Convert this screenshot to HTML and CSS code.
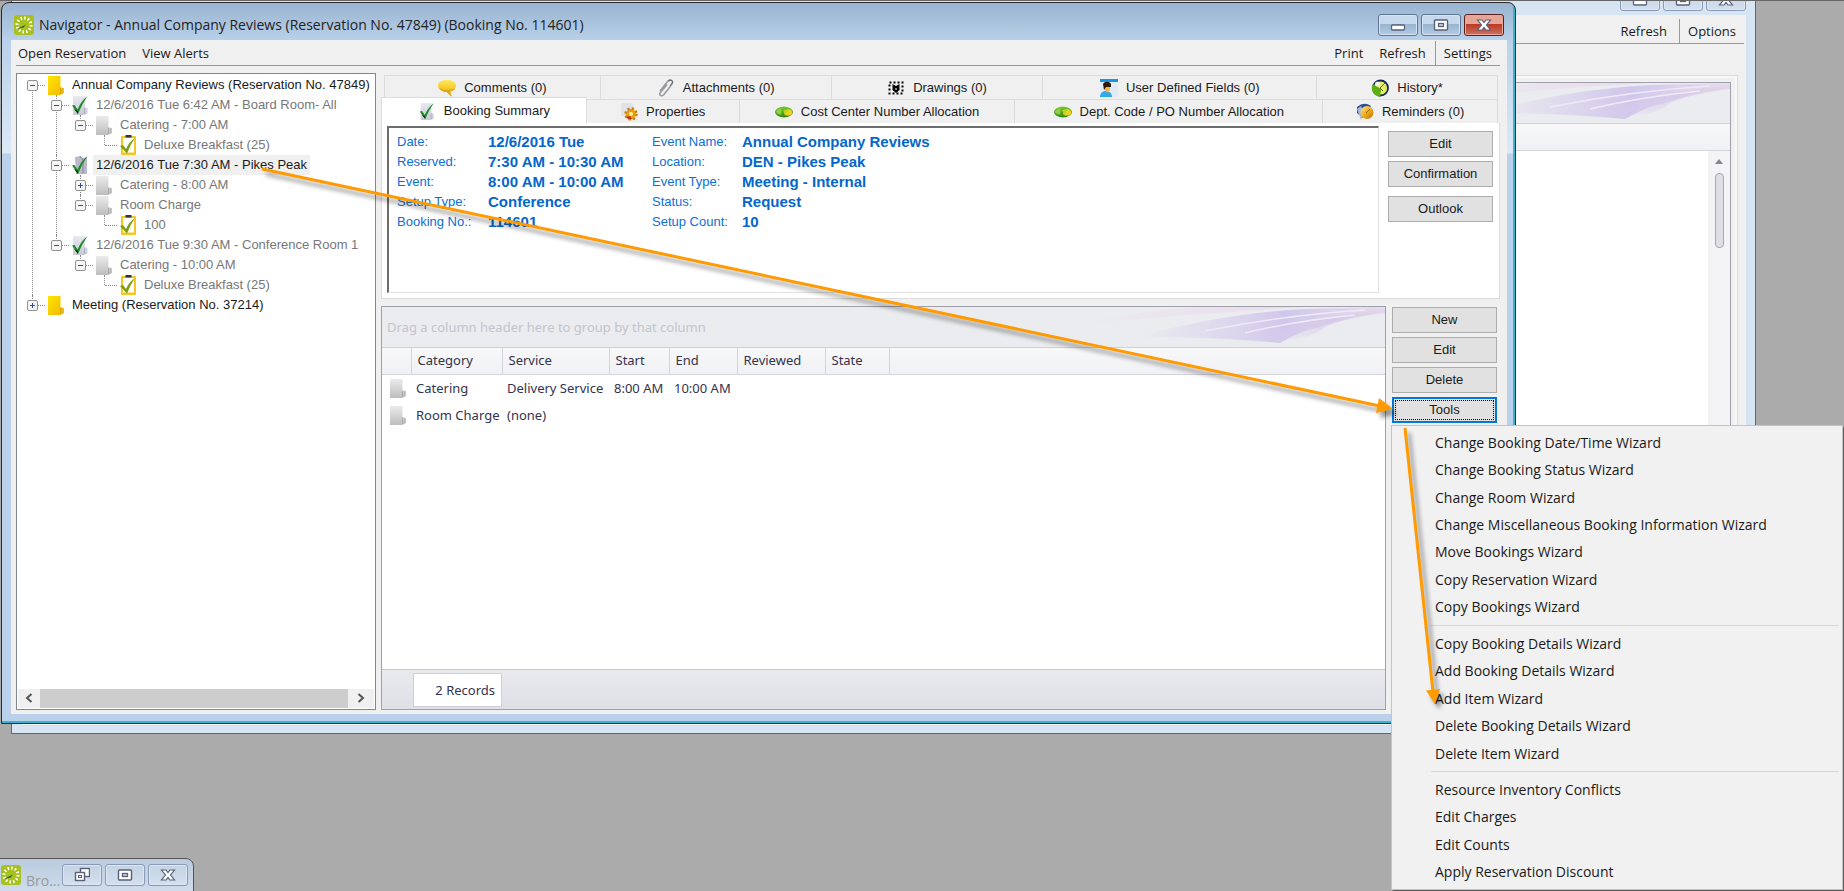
FILE: index.html
```html
<!DOCTYPE html>
<html lang="en">
<head>
<meta charset="utf-8">
<title>Navigator - Annual Company Reviews</title>
<link rel="stylesheet" href="styles.css">
</head>
<body>
<svg class="defs" aria-hidden="true">
  <defs>
    <linearGradient id="gYellow" x1="0" y1="0" x2="1" y2="1"><stop offset="0" stop-color="#ffe600"/><stop offset="1" stop-color="#f2b600"/></linearGradient>
    <linearGradient id="gGrey" x1="0" y1="0" x2="0" y2="1"><stop offset="0" stop-color="#ebebeb"/><stop offset="1" stop-color="#bdbdbd"/></linearGradient>
    <linearGradient id="gLilac" x1="0" y1="0" x2="0" y2="1"><stop offset="0" stop-color="#e9e9f1"/><stop offset="1" stop-color="#c9c9d6"/></linearGradient>
    <linearGradient id="gGold" x1="0" y1="0" x2="1" y2="1"><stop offset="0" stop-color="#ffe9a0"/><stop offset=".5" stop-color="#f0ac1c"/><stop offset="1" stop-color="#b87400"/></linearGradient>
    <linearGradient id="gSpeech" x1="0" y1="0" x2="0" y2="1"><stop offset="0" stop-color="#ffe95a"/><stop offset="1" stop-color="#eba900"/></linearGradient>
    <linearGradient id="gGreen" x1="0" y1="0" x2="0" y2="1"><stop offset="0" stop-color="#7cc82c"/><stop offset="1" stop-color="#2e8a10"/></linearGradient>
    <linearGradient id="gWave" x1="0" y1="0" x2="1" y2="0"><stop offset="0" stop-color="#d3caec" stop-opacity="0"/><stop offset=".6" stop-color="#cabdea" stop-opacity=".8"/><stop offset="1" stop-color="#e0d2ea" stop-opacity=".6"/></linearGradient>
    <linearGradient id="gWave2" x1="0" y1="1" x2="1" y2="0"><stop offset="0" stop-color="#ddd8ee" stop-opacity="0"/><stop offset=".7" stop-color="#d4c4e8" stop-opacity=".6"/><stop offset="1" stop-color="#e2d2ea" stop-opacity=".7"/></linearGradient>
    <linearGradient id="gPink" x1="0" y1="0" x2="1" y2="0"><stop offset="0" stop-color="#eadcea" stop-opacity="0"/><stop offset="1" stop-color="#ead9ea"/></linearGradient>
  </defs>
  <symbol id="i-app" viewBox="0 0 20 20"><rect width="20" height="20" rx="3" fill="#a9c11f"/><circle cx="10" cy="10" r="7" fill="none" stroke="#fff" stroke-width="3" stroke-dasharray="1.500 2.165"/><path d="M3 14l9-4.500-2.500 3z" fill="#155a6b"/></symbol>
  <symbol id="i-folder" viewBox="0 0 16 20"><path d="M0 1h12.500v11l3 1v5.500L12 20H0z" fill="url(#gYellow)"/><path d="M12.500 13v6M15 13v5" fill="none" stroke="#d9a400"/></symbol>
  <symbol id="i-doc" viewBox="0 0 16 20"><path d="M0 1h12.500v11l3 1v5.500L12 20H0z" fill="url(#gGrey)"/><path d="M12.500 13v6M15 13v5" fill="none" stroke="#a9a9a9"/></symbol>
  <symbol id="i-check" viewBox="0 0 16 20"><path d="M1 1h12v11l2.500 1v5.500L12 20H1z" fill="url(#gLilac)"/><path d="M12.500 13v6" fill="none" stroke="#adadbd"/><path d="M0 10.500l2.500-.5 3 4.500Q9 6 15.500 1 10 9 6 19z" fill="#1d8a2a"/><path d="M2 14l4 2v3z" fill="#06330d"/></symbol>
  <symbol id="i-open" viewBox="0 0 16 20"><path d="M3 2l5-1 3 2 4-1v17H4z" fill="#b9b9c9"/><path d="M8 1l3 4v13" fill="none" stroke="#85859b"/><path d="M0 10.500l2.500-.5 3 4.500Q9 6 15.500 1 10 9 6 19z" fill="#1d8a2a"/><path d="M2 14l4 2v3z" fill="#06330d"/></symbol>
  <symbol id="i-clip" viewBox="0 0 16 20"><rect x="1" y="1" width="15" height="19" rx="1" fill="#f3c623"/><rect x="3" y="3" width="11" height="14.500" fill="#fff"/><rect x="5.500" y="0" width="6" height="2.500" fill="#333"/><path d="M0 11l3-1 3 4Q9 7 15 3 10 10 7 18.500z" fill="#7c9d13"/></symbol>
  <symbol id="i-comment" viewBox="0 0 18 18"><path d="M9 1c5 0 9 2 9 5.500s-3.500 5.500-6 6L14 18l-5.500-5C4 13 0 10.500 0 6.500S4 1 9 1z" fill="url(#gSpeech)"/><path d="M1 9q3 4 8 4l5 5-2-5.500q4-.5 5-3-8 3-16-.5z" fill="#d79800" opacity=".6"/></symbol>
  <symbol id="i-attach" viewBox="0 0 18 18"><path d="M3 12L11 2c1.500-1.500 5-1 4.500 1.500C15 5 9 13 6.500 16c-1.500 1.500-5 .5-3.500-2L10 5.500" fill="none" stroke="#9a9aa0" stroke-width="1.600"/><path d="M11 2c1.500-1.500 5-1 4.500 1.500l-2 3" fill="none" stroke="#5d5d66"/></symbol>
  <symbol id="i-draw" viewBox="0 0 18 18"><rect x="2.500" y="3.500" width="13" height="11" fill="none" stroke="#000" stroke-width="2" stroke-dasharray="2 2"/><path d="M5.500 5l3.500 2 3.500-2v6L9 14l-3.500-3z" fill="#000"/><path d="M9 9v2" stroke="#fff"/></symbol>
  <symbol id="i-user" viewBox="0 0 18 18"><rect width="18" height="18" fill="#e3ebf5"/><rect width="18" height="3" fill="#1597e5"/><path d="M0 18c0-4 3-6 6-6s6 2 6 6z" fill="#34a9ea"/><path d="M4 6h6v5l-2 3-4-4z" fill="#f4b54d"/><path d="M3 5c2-3 6-3 8 0v3H6l-2 3z" fill="#2d1608"/></symbol>
  <symbol id="i-history" viewBox="0 0 18 18"><circle cx="9.500" cy="9" r="7.500" fill="#e8ef66" stroke="#14285a" stroke-width="1.800"/><path d="M2 5c-3 6 0 12 7 13l1-8z" fill="#5cae12"/><path d="M9 9l5-5M9 9l3 3" stroke="#5c6c12"/><circle cx="6.500" cy="5" r="2.500" fill="#fff" opacity=".8"/></symbol>
  <symbol id="i-prop" viewBox="0 0 18 18"><path d="M1 0h10l3 3v10H1z" fill="#e2e2ea"/><g transform="translate(11 11)"><circle r="5" fill="#e8a010"/><circle r="5.500" fill="none" stroke="#c9810b" stroke-width="2.500" stroke-dasharray="2.200 2.120"/><circle r="2" fill="#fff0a0"/><path d="M-5 3q2 3 6 2l-2-3z" fill="#d02a10"/></g></symbol>
  <symbol id="i-money" viewBox="0 0 20 14"><ellipse cx="10" cy="7" rx="10" ry="6" fill="url(#gGreen)"/><path d="M1 7q2-4 6-4v7q-4 0-6-3z" fill="#8fcf4a"/><ellipse cx="14.500" cy="7.500" rx="4.500" ry="3.500" fill="#f0d020"/><path d="M9 5q3-1 6 0l-4 5z" fill="#b7d622"/></symbol>
  <symbol id="i-remind" viewBox="0 0 18 18"><path d="M1 4Q8-2 15 3L7 15 1 10z" fill="#27509a"/><path d="M1 6l4-3 3 7-3 7z" fill="#a9b7d4"/><circle cx="11" cy="9.500" r="6.500" fill="url(#gGold)"/><path d="M10 10l4-4" stroke="#9a6500"/></symbol>
  <symbol id="i-min" viewBox="0 0 16 16"><rect x="1.500" y="8" width="13" height="5" rx="1" fill="#fff" stroke="#59617a" stroke-width="1.300"/></symbol>
  <symbol id="i-max" viewBox="0 0 16 16"><rect x="1.500" y="3" width="13" height="10" rx="1" fill="#fff" stroke="#59617a" stroke-width="1.400"/><rect x="5.500" y="6.500" width="5" height="3" fill="#c5d3e6" stroke="#59617a" stroke-width="1.300"/></symbol>
  <symbol id="i-restore" viewBox="0 0 16 16"><rect x="6.500" y="1.500" width="9" height="8" fill="#fff" stroke="#59617a" stroke-width="1.400"/><rect x="1.500" y="5.500" width="9" height="8" fill="#fff" stroke="#59617a" stroke-width="1.400"/><rect x="4.500" y="8.500" width="3" height="2" fill="none" stroke="#59617a"/></symbol>
  <symbol id="i-close" viewBox="0 0 16 16"><path d="M1.500 3H6l2 2.500L10 3h4.500L10.500 8l4 5H10l-2-2.500L6 13H1.500l4-5z" fill="#fff" stroke="#59617a" stroke-width="1.200"/></symbol>
  <symbol id="i-wave" viewBox="0 0 310 40"><path d="M0 18Q120 6 230 0H130Q70 2 0 18z" fill="url(#gPink)"/><path d="M60 30Q150 6 230 2l80-2v5Q270 10 245 20 225 24 205 36q-60-6-145-6z" fill="url(#gWave)"/><path d="M150 38q40-10 70-20 40-10 90-16v4q-40 5-60 14-8 8-25 11-35 5-75 7z" fill="url(#gWave2)"/><path d="M130 24Q210 8 290 3M170 26Q220 14 280 8" fill="none" stroke="#efeaf6" stroke-width="1.500"/></symbol>
</svg>

<main class="desktop">
  <section class="window back-window" aria-label="Browser">
    <div class="caption-buttons back-caption">
      <button class="cap pale" aria-label="Minimize"><svg><use href="#i-min"/></svg></button>
      <button class="cap pale" aria-label="Maximize"><svg><use href="#i-max"/></svg></button>
      <button class="cap pale" aria-label="Close"><svg><use href="#i-close"/></svg></button>
    </div>
    <div class="back-client">
      <div class="menubar"><span class="grow"></span><button class="link">Refresh</button><button class="link split">Options</button></div>
      <div class="back-page">
        <div class="back-grid">
          <div class="group-panel"><svg class="wave" preserveAspectRatio="none"><use href="#i-wave"/></svg></div>
          <div class="back-head"></div>
          <div class="back-body"><div class="vscroll"><span class="up"></span><span class="vthumb"></span></div></div>
        </div>
      </div>
    </div>
  </section>

  <section class="window main-window" aria-label="Navigator">
    <header class="titlebar">
      <svg class="app"><use href="#i-app"/></svg>
      <h1>Navigator - Annual Company Reviews (Reservation No. 47849) (Booking No. 114601)</h1>
      <div class="caption-buttons">
        <button class="cap" aria-label="Minimize"><svg><use href="#i-min"/></svg></button>
        <button class="cap" aria-label="Maximize"><svg><use href="#i-max"/></svg></button>
        <button class="cap red" aria-label="Close"><svg><use href="#i-close"/></svg></button>
      </div>
    </header>
    <div class="client">
      <nav class="menubar">
        <button class="link">Open Reservation</button><button class="link">View Alerts</button>
        <span class="grow"></span>
        <button class="link">Print</button><button class="link">Refresh</button><button class="link split">Settings</button>
      </nav>
      <div class="columns">
        <aside class="tree-box">
          <ul class="tree">
            <li><div class="row"><button class="exp" aria-label="Collapse"></button><i></i><svg><use href="#i-folder"/></svg><span class="dark">Annual Company Reviews (Reservation No. 47849)</span></div>
              <ul>
                <li><div class="row"><button class="exp" aria-label="Collapse"></button><i></i><svg><use href="#i-check"/></svg><span>12/6/2016 Tue 6:42 AM - Board Room- All</span></div>
                  <ul><li><div class="row"><button class="exp" aria-label="Collapse"></button><i></i><svg><use href="#i-doc"/></svg><span>Catering - 7:00 AM</span></div>
                    <ul><li><div class="row leaf"><i></i><svg><use href="#i-clip"/></svg><span>Deluxe Breakfast (25)</span></div></li></ul></li></ul></li>
                <li><div class="row"><button class="exp" aria-label="Collapse"></button><i></i><svg><use href="#i-open"/></svg><span class="dark selected">12/6/2016 Tue 7:30 AM - Pikes Peak</span></div>
                  <ul>
                    <li><div class="row"><button class="exp plus" aria-label="Expand"></button><i></i><svg><use href="#i-doc"/></svg><span>Catering - 8:00 AM</span></div></li>
                    <li><div class="row"><button class="exp" aria-label="Collapse"></button><i></i><svg><use href="#i-doc"/></svg><span>Room Charge</span></div>
                      <ul><li><div class="row leaf"><i></i><svg><use href="#i-clip"/></svg><span>100</span></div></li></ul></li>
                  </ul></li>
                <li><div class="row"><button class="exp" aria-label="Collapse"></button><i></i><svg><use href="#i-check"/></svg><span>12/6/2016 Tue 9:30 AM - Conference Room 1</span></div>
                  <ul><li><div class="row"><button class="exp" aria-label="Collapse"></button><i></i><svg><use href="#i-doc"/></svg><span>Catering - 10:00 AM</span></div>
                    <ul><li><div class="row leaf"><i></i><svg><use href="#i-clip"/></svg><span>Deluxe Breakfast (25)</span></div></li></ul></li></ul></li>
              </ul></li>
            <li><div class="row"><button class="exp plus" aria-label="Expand"></button><i></i><svg><use href="#i-folder"/></svg><span class="dark">Meeting (Reservation No. 37214)</span></div></li>
          </ul>
          <div class="hscroll">
            <button aria-label="Scroll left"><svg viewBox="0 0 8 10"><path d="M6.500 1L2 5l4.500 4" /></svg></button>
            <span class="hthumb"></span>
            <button aria-label="Scroll right"><svg viewBox="0 0 8 10"><path d="M1.500 1L6 5 1.500 9" /></svg></button>
          </div>
        </aside>
        <div class="detail">
          <div class="tabs tabs-back" role="tablist">
            <button class="tab" role="tab"><svg><use href="#i-comment"/></svg>Comments (0)</button>
            <button class="tab" role="tab"><svg><use href="#i-attach"/></svg>Attachments (0)</button>
            <button class="tab" role="tab"><svg><use href="#i-draw"/></svg>Drawings (0)</button>
            <button class="tab" role="tab"><svg><use href="#i-user"/></svg>User Defined Fields (0)</button>
            <button class="tab" role="tab"><svg><use href="#i-history"/></svg>History*</button>
          </div>
          <div class="tabs tabs-front" role="tablist">
            <button class="tab active" role="tab" aria-selected="true"><svg><use href="#i-check"/></svg>Booking Summary</button>
            <button class="tab" role="tab"><svg><use href="#i-prop"/></svg>Properties</button>
            <button class="tab" role="tab"><svg><use href="#i-money"/></svg>Cost Center Number Allocation</button>
            <button class="tab" role="tab"><svg><use href="#i-money"/></svg>Dept. Code / PO Number Allocation</button>
            <button class="tab" role="tab"><svg><use href="#i-remind"/></svg>Reminders (0)</button>
          </div>
          <div class="page">
            <dl class="summary">
              <dt>Date:</dt><dd>12/6/2016 Tue</dd><dt>Event Name:</dt><dd>Annual Company Reviews</dd>
              <dt>Reserved:</dt><dd>7:30 AM - 10:30 AM</dd><dt>Location:</dt><dd>DEN - Pikes Peak</dd>
              <dt>Event:</dt><dd>8:00 AM - 10:00 AM</dd><dt>Event Type:</dt><dd>Meeting - Internal</dd>
              <dt>Setup Type:</dt><dd>Conference</dd><dt>Status:</dt><dd>Request</dd>
              <dt>Booking No.:</dt><dd>114601</dd><dt>Setup Count:</dt><dd>10</dd>
            </dl>
            <div class="side page-side">
              <button class="btn">Edit</button><button class="btn">Confirmation</button><button class="btn apart">Outlook</button>
            </div>
          </div>
          <div class="lower">
            <div class="grid-box">
              <div class="group-panel"><span>Drag a column header here to group by that column</span><svg class="wave" preserveAspectRatio="none"><use href="#i-wave"/></svg></div>
              <table>
                <colgroup><col class="c0"><col class="c1"><col class="c2"><col class="c3"><col class="c4"><col class="c5"><col class="c6"><col></colgroup>
                <thead><tr><th></th><th>Category</th><th>Service</th><th>Start</th><th>End</th><th>Reviewed</th><th>State</th><th></th></tr></thead>
                <tbody>
                  <tr><td><svg><use href="#i-doc"/></svg></td><td>Catering</td><td>Delivery Service</td><td>8:00 AM</td><td>10:00 AM</td><td></td><td></td><td></td></tr>
                  <tr><td><svg><use href="#i-doc"/></svg></td><td>Room Charge</td><td>(none)</td><td></td><td></td><td></td><td></td><td></td></tr>
                </tbody>
              </table>
              <footer><span>2 Records</span></footer>
            </div>
            <div class="side lower-side">
              <button class="btn">New</button><button class="btn">Edit</button><button class="btn">Delete</button><button class="btn focused">Tools</button>
            </div>
          </div>
        </div>
      </div>
    </div>
  </section>

  <section class="mini-window" aria-label="Minimized window">
    <svg class="app"><use href="#i-app"/></svg><span class="mini-title">Bro...</span>
    <div class="caption-buttons">
      <button class="cap pale" aria-label="Restore"><svg><use href="#i-restore"/></svg></button>
      <button class="cap pale" aria-label="Maximize"><svg><use href="#i-max"/></svg></button>
      <button class="cap pale" aria-label="Close"><svg><use href="#i-close"/></svg></button>
    </div>
  </section>

  <div class="menu" role="menu">
    <button role="menuitem">Change Booking Date/Time Wizard</button>
    <button role="menuitem">Change Booking Status Wizard</button>
    <button role="menuitem">Change Room Wizard</button>
    <button role="menuitem">Change Miscellaneous Booking Information Wizard</button>
    <button role="menuitem">Move Bookings Wizard</button>
    <button role="menuitem">Copy Reservation Wizard</button>
    <button role="menuitem">Copy Bookings Wizard</button>
    <hr>
    <button role="menuitem">Copy Booking Details Wizard</button>
    <button role="menuitem">Add Booking Details Wizard</button>
    <button role="menuitem">Add Item Wizard</button>
    <button role="menuitem">Delete Booking Details Wizard</button>
    <button role="menuitem">Delete Item Wizard</button>
    <hr>
    <button role="menuitem">Resource Inventory Conflicts</button>
    <button role="menuitem">Edit Charges</button>
    <button role="menuitem">Edit Counts</button>
    <button role="menuitem">Apply Reservation Discount</button>
  </div>

  <svg class="arrows" aria-hidden="true">
    <g><path d="M262 169L1380 406" /><path class="head" d="M1379 398l14 11-17 4z"/></g>
    <g><path d="M1405 428L1433 692"/><path class="head" d="M1426 690.500l14-1.500-5 15z"/></g>
  </svg>
</main>
</body>
</html>
```

FILE: styles.css
```css
* { box-sizing: border-box; }
body { margin: 0; overflow: hidden; font: 13px/16px "Liberation Sans", sans-serif; color: #1a1a1a; }
button { font: inherit; color: inherit; margin: 0; padding: 0; border: 0; background: none; white-space: nowrap; }
ul, dl, dd { margin: 0; padding: 0; list-style: none; }
.defs { position: absolute; width: 0; height: 0; }
.desktop { position: relative; height: 100vh; background: #ababab; border-top: 1px solid #666; overflow: hidden; }
.grow { flex: 1; }

/* windows on the desktop */
.window { position: absolute; display: flex; flex-direction: column; }
.back-window { inset: 0 88px 157px 11px; background: #d7e4f2; border: 1px solid #666; border-top: 0; padding: 0 9px 7px; }
.main-window { inset: 1px 328px 167px 1px; padding: 0 8px 9px 9px; border: 1px solid #2a2a2a; border-radius: 8px 8px 0 0;
  background: linear-gradient(#99b4d1, #b9d1ea 38px, #dce9f7 150px, #b9d1ea 151px); box-shadow: inset -2px -2px #35b6cf; }
.titlebar { display: flex; align-items: center; height: 37px; padding: 6px 3px 0; }
.app { width: 20px; height: 20px; flex: none; }
h1 { flex: 1; margin: 0 0 0 5px; font: 14px/20px "Open Sans", sans-serif; white-space: nowrap; color: #222; }
.caption-buttons { display: flex; gap: 3px; }
.cap { display: flex; align-items: center; justify-content: center; width: 40px; height: 22px; border: 1px solid #5f7591; border-radius: 3px;
  background: linear-gradient(#c5d8ec 45%, #99b4d1 46%, #b4cbe3); box-shadow: inset 0 0 0 1px #d6e4f3; }
.cap svg { width: 16px; height: 16px; }
.cap.red { border-color: #5b1f1c; background: linear-gradient(#e7a597 45%, #b93a24 46%, #d0705c); box-shadow: inset 0 0 0 1px #e9a99c; }
.cap.pale { border-color: #8b9ab8; background: linear-gradient(#c4d2e2, #d3e0ee); box-shadow: inset 0 0 0 1px #dce7f3; }

.client { flex: 1; min-height: 0; display: flex; flex-direction: column; padding: 0 7px 4px 5px; background: #f0f0f0; }
.menubar { display: flex; align-items: center; height: 26px; margin-bottom: 7px; border-bottom: 1px solid #999; font: 13px/20px "Open Sans", sans-serif; }
.menubar .link { margin-left: 16px; }
.menubar .link:first-child { margin-left: 2px; }
.menubar .link.split { margin-left: 9px; padding: 2px 8px; border-left: 1px solid #999; }
.columns { flex: 1; min-height: 0; display: grid; grid-template-columns: 360px minmax(0, 1fr); gap: 5px; }

/* tree */
.tree-box { display: flex; flex-direction: column; justify-content: space-between; overflow: hidden; background: #fff; border: 1px solid #828790; padding: 1px; }
.tree { padding-left: 9px; overflow: hidden; color: #777; }
.tree ul { padding-left: 24px; }
.tree li { position: relative; }
.tree li::before { content: ""; position: absolute; left: 5px; top: 0; bottom: 0; border-left: 1px dotted #888; }
.tree li:last-child::before { bottom: auto; height: 10px; }
.tree > li:first-child::before { top: 10px; }
.row { position: relative; display: flex; align-items: center; height: 20px; white-space: nowrap; }
.row svg { width: 16px; height: 20px; margin-left: 3px; flex: none; }
.row i { width: 7px; border-top: 1px dotted #888; flex: none; }
.leaf i { width: 12px; margin-left: 6px; }
.row span { margin-left: 5px; padding: 0 3px; line-height: 20px; }
.row .dark { color: #1a1a1a; }
.row .selected { background: #f0f0f0; }
.exp { width: 11px; height: 11px; flex: none; border: 1px solid #919191; border-radius: 2px; background: linear-gradient(#2c4e96, #2c4e96) center / 5px 1px no-repeat, #f6f6f6; }
.exp.plus { background: linear-gradient(#2c4e96, #2c4e96) center / 5px 1px no-repeat, linear-gradient(#2c4e96, #2c4e96) center / 1px 5px no-repeat, #f6f6f6; }
.hscroll { display: flex; height: 19px; background: #f0f0f0; }
.hscroll button { width: 22px; }
.hscroll button:last-child { width: 26px; }
.hscroll svg { width: 8px; height: 10px; fill: none; stroke: #555; stroke-width: 2; }
.hthumb { flex: 1; background: #cdcdcd; }

/* tabs */
.detail { display: flex; flex-direction: column; min-width: 0; }
.tabs { display: grid; margin: 0 2px 0 3px; }
.tabs-back { grid-template-columns: 217fr 231fr 212fr 274fr 181fr; height: 24px; margin-top: 2px; }
.tabs-front { grid-template-columns: 206fr 153fr 276fr 308fr 175fr; height: 24px; margin-left: 0; }
.tab { display: flex; align-items: center; justify-content: center; gap: 8px; border: 1px solid #dcdcdc; border-width: 1px 1px 0 0; }
.tabs-back .tab:first-child { border-left-width: 1px; }
.tab svg { width: 18px; height: 18px; }
.tab.active { position: relative; margin-top: -2px; border-left-width: 1px; background: #fff; }
.page { display: flex; gap: 9px; padding: 3px 6px 5px 5px; background: #fff; border: 1px solid #dcdcdc; border-top: 0; }
.summary { flex: 1; display: grid; grid-template-columns: 91px 164px 90px 1fr; grid-auto-rows: 20px; align-items: center; min-height: 167px;
  padding: 4px 8px; border: solid #e3e3e3; border-width: 2px 1px 1px 2px; border-top-color: #6d6d6d; border-left-color: #6d6d6d; color: #0b6fd6; white-space: nowrap; }
.summary dd { font-size: 15px; font-weight: bold; color: #0566cc; }
.side { display: flex; flex-direction: column; gap: 4px; width: 105px; }
.page-side { padding-top: 5px; }
.btn { height: 26px; border: 1px solid #adadad; background: #e1e1e1; }
.btn.apart { margin-top: 5px; }
.btn.focused { border: 2px solid #0078d7; outline: 1px dotted #000; outline-offset: -4px; }

/* booking details grid */
.lower { flex: 1; display: flex; gap: 6px; margin-top: 7px; padding-right: 3px; }
.lower-side { padding-top: 1px; }
.grid-box { flex: 1; display: flex; flex-direction: column; border: 1px solid #a0a0ac; background: #fff; font: 13px/18px "Noto Sans", sans-serif; color: #33334d; }
.group-panel { display: flex; justify-content: space-between; align-items: center; height: 41px; padding-left: 5px; background: #ebecef; border-bottom: 1px solid #cfd0d8; color: #c3c4cc; }
.wave { width: 310px; height: 40px; }
table { width: 100%; table-layout: fixed; border-collapse: collapse; }
.c0 { width: 29px; } .c1 { width: 91px; } .c2 { width: 107px; } .c3 { width: 60px; }
.c4 { width: 68px; } .c5 { width: 88px; } .c6 { width: 64px; }
th { height: 26px; padding: 0 6px 2px; text-align: left; font-weight: normal; background: linear-gradient(#f8f8f9, #f0f1f4); border: solid #d3d4dc; border-width: 0 1px 1px 0; }
th:last-child { border-right: 0; }
td { height: 27px; padding: 0 5px; white-space: nowrap; }
td svg { display: block; width: 16px; height: 20px; margin-left: 3px; }
.grid-box footer { display: flex; align-items: center; margin-top: auto; height: 40px; padding-left: 31px; background: linear-gradient(#e9e9ee, #dfe0e6); border-top: 1px solid #c6c7cf; }
footer span { width: 89px; padding: 7px 6px; text-align: right; background: #fff; border: 1px solid #ceced6; }

/* window behind */
.back-caption { justify-content: flex-end; height: 14px; }
.back-caption .cap { margin-top: -12px; }
.back-client { flex: 1; display: flex; flex-direction: column; padding-right: 2px; background: #f0f0f0; }
.back-client .menubar { height: 29px; margin-bottom: 31px; padding-top: 3px; }
.back-client .menubar .link.split { margin-left: 12px; }
.back-page { flex: 1; display: flex; margin-right: 6px; padding: 6px 6px 6px 0; border: 1px solid #dcdcdc; box-shadow: inset 0 0 0 2px #f8f8f8; }
.back-grid { flex: 1; display: flex; flex-direction: column; border: 1px solid #a0a0ac; background: #fff; }
.back-grid .group-panel { justify-content: flex-end; }
.back-head { height: 27px; background: linear-gradient(#f8f8f9, #f0f1f4); border-bottom: 1px solid #d3d4dc; }
.back-body { flex: 1; display: flex; justify-content: flex-end; }
.vscroll { display: flex; flex-direction: column; align-items: center; gap: 9px; width: 22px; padding-top: 8px; background: #f4f4f6; }
.up { border: 4px solid transparent; border-top: 0; border-bottom: 5px solid #85858f; }
.vthumb { width: 9px; height: 75px; border: 1px solid #a9a9b1; border-radius: 4px; background: #dedee4; }

.mini-window { position: absolute; left: -1px; bottom: -8px; display: flex; align-items: center; width: 195px; height: 41px; padding: 0 5px 8px 1px; border: 1px solid #555; border-radius: 0 8px 0 0; background: linear-gradient(#b9cbdd, #d3e0ee); }
.mini-title { flex: 1; padding: 12px 0 0 5px; font: 14px/18px "Open Sans", sans-serif; color: #999; }

/* tools menu */
.menu { position: absolute; top: 424px; right: 1px; bottom: 1px; width: 452px; display: flex; flex-direction: column; padding: 3px; background: #f1f1f1; border: 1px solid #c4c4c4; box-shadow: 2px 2px 2px #555; font: 14px/20px "Open Sans", sans-serif; }
.menu button { flex: 1; padding-left: 40px; text-align: left; }
.menu hr { height: 1px; width: auto; margin: 4px 0 4px 36px; border: 0; background: #d7d7d7; }

.arrows { position: absolute; inset: -1px 0 0; width: 100%; height: 100%; pointer-events: none; }
.arrows g { fill: none; stroke: #ff9a00; stroke-width: 3; filter: drop-shadow(4px 5px 2px rgba(0, 0, 0, .4)); }
.arrows .head { fill: #ff9a00; stroke: none; }
```
